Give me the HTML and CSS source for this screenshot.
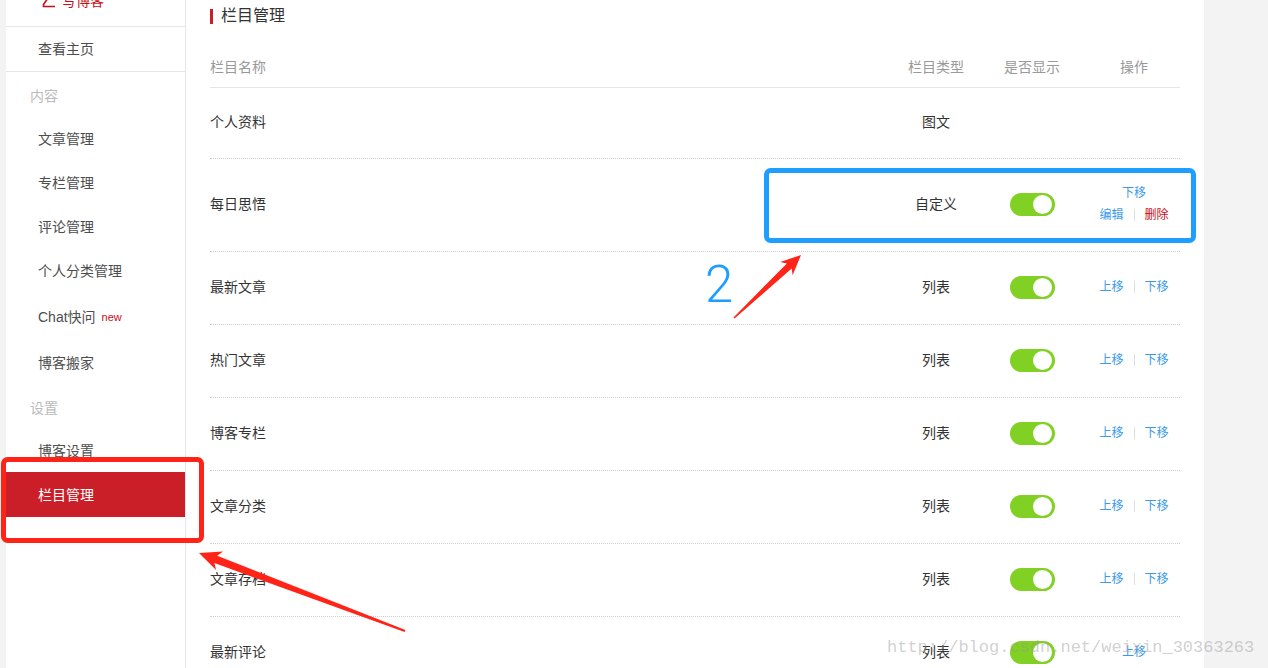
FILE: index.html
```html
<!DOCTYPE html>
<html lang="zh-CN">
<head>
<meta charset="utf-8">
<title>栏目管理</title>
<link rel="stylesheet" href="styles.css">
</head>
<body>
<div class="page">
  <aside class="sidebar">
    <div class="side-head">
      <div class="side-head-inner">
        <svg class="pen" width="14" height="20" viewBox="0 0 14 20"><path d="M11 1 L1.5 14.5 L1.5 16.5 L13 16.5" fill="none" stroke="#ca0c16" stroke-width="1.6"/></svg>
        <span>写博客</span>
      </div>
    </div>
    <a class="nav-item nav-home">查看主页</a>
    <div class="nav-label">内容</div>
    <a class="nav-item">文章管理</a>
    <a class="nav-item">专栏管理</a>
    <a class="nav-item">评论管理</a>
    <a class="nav-item">个人分类管理</a>
    <a class="nav-item nav-chat">Chat快问<sup class="new">new</sup></a>
    <a class="nav-item">博客搬家</a>
    <div class="nav-label nav-label-2">设置</div>
    <a class="nav-item nav-short">博客设置</a>
    <a class="nav-item active">栏目管理</a>
  </aside>
  <main class="main">
    <h1 class="title">栏目管理</h1>
    <div class="table">
      <div class="row head">
        <div class="c-name">栏目名称</div>
        <div class="c-type">栏目类型</div>
        <div class="c-show">是否显示</div>
        <div class="c-ops">操作</div>
      </div>
      <div class="row r-first">
        <div class="c-name">个人资料</div>
        <div class="c-type">图文</div>
        <div class="c-show"></div>
        <div class="c-ops"></div>
      </div>
      <div class="row r-tall">
        <div class="c-name">每日思悟</div>
        <div class="c-type">自定义</div>
        <div class="c-show"><span class="toggle"></span></div>
        <div class="c-ops ops-stack">
          <div><a class="link">下移</a></div>
          <div><a class="link">编辑</a><span class="sep"></span><a class="link del">删除</a></div>
        </div>
      </div>
      <div class="row">
        <div class="c-name">最新文章</div>
        <div class="c-type">列表</div>
        <div class="c-show"><span class="toggle"></span></div>
        <div class="c-ops"><a class="link">上移</a><span class="sep"></span><a class="link">下移</a></div>
      </div>
      <div class="row">
        <div class="c-name">热门文章</div>
        <div class="c-type">列表</div>
        <div class="c-show"><span class="toggle"></span></div>
        <div class="c-ops"><a class="link">上移</a><span class="sep"></span><a class="link">下移</a></div>
      </div>
      <div class="row">
        <div class="c-name">博客专栏</div>
        <div class="c-type">列表</div>
        <div class="c-show"><span class="toggle"></span></div>
        <div class="c-ops"><a class="link">上移</a><span class="sep"></span><a class="link">下移</a></div>
      </div>
      <div class="row">
        <div class="c-name">文章分类</div>
        <div class="c-type">列表</div>
        <div class="c-show"><span class="toggle"></span></div>
        <div class="c-ops"><a class="link">上移</a><span class="sep"></span><a class="link">下移</a></div>
      </div>
      <div class="row">
        <div class="c-name">文章存档</div>
        <div class="c-type">列表</div>
        <div class="c-show"><span class="toggle"></span></div>
        <div class="c-ops"><a class="link">上移</a><span class="sep"></span><a class="link">下移</a></div>
      </div>
      <div class="row">
        <div class="c-name">最新评论</div>
        <div class="c-type">列表</div>
        <div class="c-show"><span class="toggle"></span></div>
        <div class="c-ops"><a class="link">上移</a></div>
      </div>
    </div>
  </main>
  <div class="gutter"></div>

  <svg class="annot" width="1268" height="668" viewBox="0 0 1268 668">
    <rect x="3.5" y="459.5" width="198" height="81" rx="4" ry="4" fill="none" stroke="#ff2318" stroke-width="5"/>
    <rect x="766.5" y="170.5" width="427" height="70" rx="4" ry="4" fill="none" stroke="#1e9fff" stroke-width="5"/>
    <polygon points="199,553 223.1,551.5 217.2,555.7 405.4,630.1 404.6,631.9 214.4,563.1 216.1,570.1" fill="#ff2318"/>
    <polygon points="801,255 792.6,275.3 791.7,268.5 734.5,318.6 733.5,317.4 786.9,263.4 780.2,262.1" fill="#ff2318"/>
  </svg>
  <div class="num">2</div>
  <div class="watermark">http://blog.csdn.net/weixin_30363263</div>
</div>
</body>
</html>
```

FILE: styles.css
```css
* { box-sizing: border-box; }
html, body {
  margin: 0;
  padding: 0;
  background: #f3f3f3;
}
body {
  font-family: "Liberation Sans", "Noto Sans CJK SC", sans-serif;
  color: #333;
  font-size: 14px;
}
.page {
  position: relative;
  width: 1268px;
  height: 668px;
  overflow: hidden;
  display: flex;
  padding-left: 6px;
}
.sidebar {
  width: 180px;
  flex: none;
  background: #fff;
  border-right: 1px solid #e6e6e6;
  display: flex;
  flex-direction: column;
}
.side-head {
  height: 27px;
  overflow: hidden;
  border-bottom: 1px solid #e6e6e6;
}
.side-head-inner {
  display: flex;
  align-items: center;
  margin-top: -9px;
  padding-left: 36px;
  height: 20px;
  line-height: 20px;
  color: #ca0c16;
  font-size: 14px;
}
.pen { margin-right: 6px; margin-top: -2px; }
.nav-item {
  display: flex;
  align-items: center;
  height: 44px;
  padding-left: 32px;
  color: #4d4d4d;
  font-size: 14px;
  line-height: 20px;
}
.nav-home {
  height: 45px;
  border-bottom: 1px solid #e6e6e6;
}
.nav-chat { height: 48px; }
.nav-short { height: 43px; }
.nav-label {
  display: flex;
  align-items: center;
  height: 45px;
  padding-left: 24px;
  color: #bbb;
  font-size: 14px;
}
.nav-label-2 { height: 44px; }
.new {
  color: #ca0c16;
  font-size: 11px;
  margin-left: 6px;
  vertical-align: 9px;
  line-height: 1;
}
.nav-item.active {
  height: 45px;
  background: #ca1f28;
  color: #fff;
}
.main {
  width: 1018px;
  flex: none;
  background: #fff;
  padding: 0 24px;
}
.gutter { flex: 1; }
.title {
  margin: 0 0 15px;
  height: 32px;
  line-height: 32px;
  font-size: 16px;
  font-weight: normal;
  color: #333;
  display: flex;
  align-items: center;
}
.title::before {
  content: "";
  width: 3px;
  height: 15px;
  background: #ca1f28;
  margin-right: 8px;
  margin-top: 1px;
}
.table { width: 970px; }
.row {
  display: grid;
  grid-template-columns: 1fr 80px 112px 92px;
  align-items: center;
  height: 73px;
  padding-bottom: 2px;
  border-bottom: 1px dotted #cfcfcf;
  line-height: 20px;
}
.row.head {
  height: 41px;
  padding-bottom: 0;
  border-bottom: 1px solid #e6e6e6;
  color: #999;
}
.row.r-first { height: 71px; }
.row.r-tall { height: 93px; }
.c-type, .c-show, .c-ops { text-align: center; }
.c-show { display: flex; justify-content: center; }
.c-ops {
  display: flex;
  justify-content: center;
  align-items: center;
}
.ops-stack {
  flex-direction: column;
  gap: 0;
}
.ops-stack > div {
  display: flex;
  align-items: center;
  height: 22px;
}
.toggle {
  position: relative;
  display: block;
  width: 45px;
  height: 23px;
  border-radius: 12px;
  background: #80d123;
}
.toggle::after {
  content: "";
  position: absolute;
  right: 3px;
  top: 2px;
  width: 19px;
  height: 19px;
  border-radius: 50%;
  background: #fff;
}
.link {
  color: #3a9ae8;
  font-size: 12px;
  line-height: 20px;
}
.link.del { color: #ca0c16; }
.sep {
  display: inline-block;
  width: 1px;
  height: 12px;
  background: #dedede;
  margin: 0 10px;
}
.annot {
  position: absolute;
  left: 0;
  top: 0;
  pointer-events: none;
}
.num {
  position: absolute;
  left: 705px;
  top: 255px;
  font-family: Roboto, "Liberation Sans", sans-serif;
  font-weight: 300;
  font-size: 51px;
  line-height: 60px;
  color: #1e9fff;
}
.watermark {
  position: absolute;
  left: 887px;
  top: 636px;
  font-family: "Liberation Mono", monospace;
  font-size: 17px;
  line-height: 24px;
  color: rgba(150, 150, 150, 0.45);
  white-space: nowrap;
  pointer-events: none;
}
```
